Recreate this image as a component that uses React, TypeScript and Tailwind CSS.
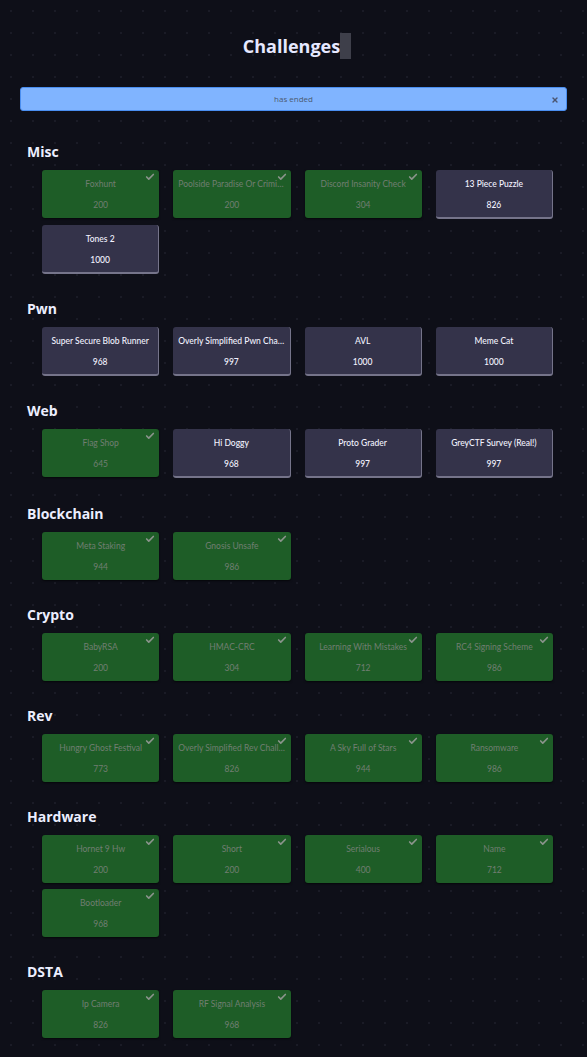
import { Check, X } from 'lucide-react';

type Chal = { name: string; pts: number; solved: boolean };

const sections: { title: string; items: Chal[] }[] = [
    {
        title: 'Misc',
        items: [
            { name: 'Foxhunt', pts: 200, solved: true },
            { name: 'Poolside Paradise Or Criminal Investigation', pts: 200, solved: true },
            { name: 'Discord Insanity Check', pts: 304, solved: true },
            { name: '13 Piece Puzzle', pts: 826, solved: false },
            { name: 'Tones 2', pts: 1000, solved: false },
        ],
    },
    {
        title: 'Pwn',
        items: [
            { name: 'Super Secure Blob Runner', pts: 968, solved: false },
            { name: 'Overly Simplified Pwn Challenge', pts: 997, solved: false },
            { name: 'AVL', pts: 1000, solved: false },
            { name: 'Meme Cat', pts: 1000, solved: false },
        ],
    },
    {
        title: 'Web',
        items: [
            { name: 'Flag Shop', pts: 645, solved: true },
            { name: 'Hi Doggy', pts: 968, solved: false },
            { name: 'Proto Grader', pts: 997, solved: false },
            { name: 'GreyCTF Survey (Real!)', pts: 997, solved: false },
        ],
    },
    {
        title: 'Blockchain',
        items: [
            { name: 'Meta Staking', pts: 944, solved: true },
            { name: 'Gnosis Unsafe', pts: 986, solved: true },
        ],
    },
    {
        title: 'Crypto',
        items: [
            { name: 'BabyRSA', pts: 200, solved: true },
            { name: 'HMAC-CRC', pts: 304, solved: true },
            { name: 'Learning With Mistakes', pts: 712, solved: true },
            { name: 'RC4 Signing Scheme', pts: 986, solved: true },
        ],
    },
    {
        title: 'Rev',
        items: [
            { name: 'Hungry Ghost Festival', pts: 773, solved: true },
            { name: 'Overly Simplified Rev Challenge', pts: 826, solved: true },
            { name: 'A Sky Full of Stars', pts: 944, solved: true },
            { name: 'Ransomware', pts: 986, solved: true },
        ],
    },
    {
        title: 'Hardware',
        items: [
            { name: 'Hornet 9 Hw', pts: 200, solved: true },
            { name: 'Short', pts: 200, solved: true },
            { name: 'Serialous', pts: 400, solved: true },
            { name: 'Name', pts: 712, solved: true },
            { name: 'Bootloader', pts: 968, solved: true },
        ],
    },
    {
        title: 'DSTA',
        items: [
            { name: 'Ip Camera', pts: 826, solved: true },
            { name: 'RF Signal Analysis', pts: 968, solved: true },
        ],
    },
];

function Card({ c }: { c: Chal }) {
    if (c.solved) {
        return (
            <div className="relative h-12 rounded-[3px] bg-[#1e5d27] shadow-[0_1px_2px_rgba(0,0,0,.6)] flex flex-col items-center pt-[8px] px-[5px] text-[#717d72] text-[8.5px]">
                <Check className="absolute top-[2px] right-[4px] w-[10px] h-[10px] text-[#8b948c]" strokeWidth={4} />
                <div className="w-full truncate text-center leading-[12px]">{c.name}</div>
                <div className="mt-[9px] leading-[12px]">{c.pts}</div>
            </div>
        );
    }
    return (
        <div className="h-[49px] rounded-[3px] bg-[#34334a] border-r border-b-2 border-[#75748a] flex flex-col items-center pt-[8px] px-[5px] text-[#f2f2ff] text-[8.5px] font-medium">
            <div className="w-full truncate text-center leading-[12px]">{c.name}</div>
            <div className="mt-[9px] leading-[12px]">{c.pts}</div>
        </div>
    );
}

export default function App() {
    return (
        <div className="min-h-screen bg-[#0e0f18] bg-[radial-gradient(circle,#1a1b26_1px,transparent_1px)] bg-[size:22px_22px] px-5 pb-6 font-['Open_Sans',sans-serif]">
            <div className="pt-[33px] pl-[7px] flex justify-center items-center">
                <h1 className="text-[18px] font-bold text-[#e6e8ff] leading-[26px]">Challenges</h1>
                <span className="w-[11px] h-[26px] bg-[#3e3f4a]" />
            </div>

            <div className="mt-[28px] h-6 rounded-[3px] bg-[#80b4ff] border border-[#4a8ef0] relative flex items-center justify-center">
                <span className="text-[8px] text-[#4b5a70]">has ended</span>
                <X className="absolute right-[7px] top-[8px] w-[8px] h-[8px] text-[#4b5570]" strokeWidth={4} />
            </div>

            <div className="mt-[31px] flex flex-col gap-[25px]">
                {sections.map((s, i) => (
                    <div key={s.title} className={i === 3 ? 'mt-px' : ''}>
                        <h2 className="pl-[7px] text-[14px] font-bold text-[#eceeff] leading-[20px]">{s.title}</h2>
                        <div className="mt-2 ml-[22px] mr-[14px] grid grid-cols-4 items-start gap-x-[14px] gap-y-[6px] font-['Lato',sans-serif]">
                            {s.items.map((c) => (
                                <Card key={c.name} c={c} />
                            ))}
                        </div>
                    </div>
                ))}
            </div>
        </div>
    );
}
